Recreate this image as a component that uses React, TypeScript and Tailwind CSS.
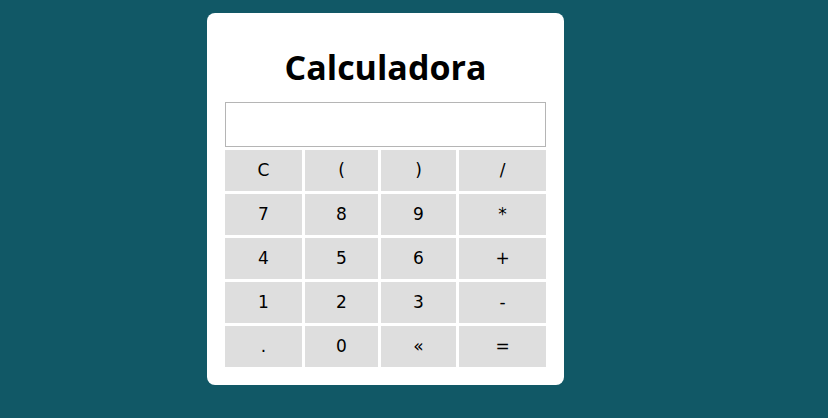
const KEYS = ["C", "(", ")", "/", "7", "8", "9", "*", "4", "5", "6", "+", "1", "2", "3", "-", ".", "0", "«", "="];

export default function App() {
  return (
    <div className="h-[418px] w-full bg-[#115866] pt-[13px]">
      <div className="flex w-[771px] justify-center">
        <div className="flex h-[372px] w-[357px] flex-col items-center rounded-lg bg-white px-[18px]">
          <h1 className="mt-[30px] text-[34px] font-bold leading-[48px] text-black [font-family:'Open_Sans',sans-serif]">
            Calculadora
          </h1>
          <input
            type="text"
            className="mt-[11px] h-[45px] w-[321px] border border-[#b5b5b5] bg-white outline-none"
          />
          <div className="mt-[3px] grid grid-cols-[77px_73px_75px_87px] gap-[3px]">
            {KEYS.map((k) => (
              <button
                key={k}
                type="button"
                className="flex h-[41px] items-center justify-center bg-[#dedede] text-[17px] text-black [font-family:'DejaVu_Sans',Verdana,sans-serif]"
              >
                {k}
              </button>
            ))}
          </div>
        </div>
      </div>
    </div>
  );
}
